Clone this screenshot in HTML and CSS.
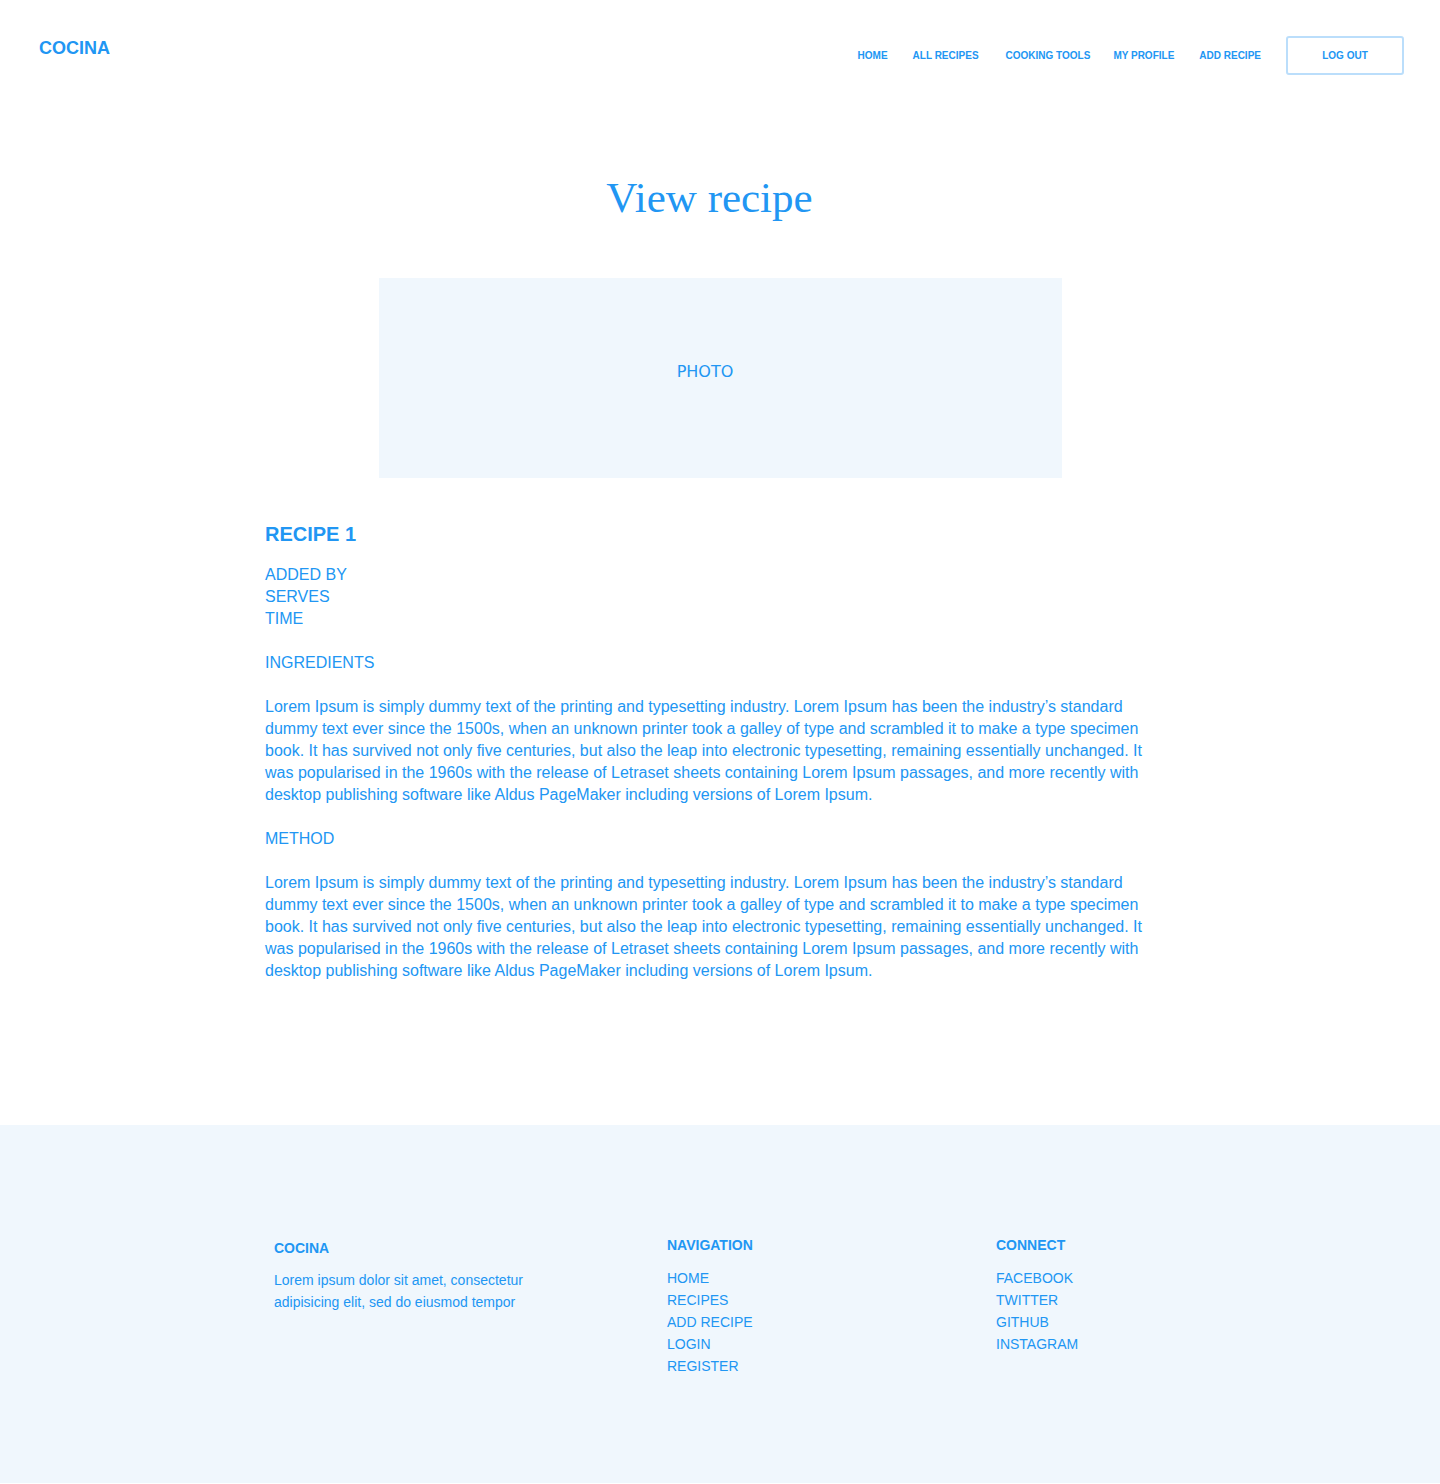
FILE: index.html
```html
<!DOCTYPE html>
<html lang="en">
<head>
<meta charset="utf-8">
<title>Cocina - View recipe</title>
<link rel="stylesheet" href="styles.css">
</head>
<body>
<header class="topbar">
  <a class="logo" href="#">COCINA</a>
  <nav class="mainnav">
    <a href="#">HOME</a>
    <a href="#">ALL RECIPES</a>
    <a class="wide" href="#">COOKING TOOLS</a>
    <a href="#">MY PROFILE</a>
    <a href="#">ADD RECIPE</a>
    <a class="logout" href="#">LOG OUT</a>
  </nav>
</header>

<main class="content">
  <h1 class="title">View recipe</h1>
  <div class="photo">PHOTO</div>
  <h2 class="recipe-name">RECIPE 1</h2>
  <ul class="meta">
    <li>ADDED BY</li>
    <li>SERVES</li>
    <li>TIME</li>
  </ul>
  <h3 class="section">INGREDIENTS</h3>
  <p class="text">Lorem Ipsum is simply dummy text of the printing and typesetting industry. Lorem Ipsum has been the industry’s standard dummy text ever since the 1500s, when an unknown printer took a galley of type and scrambled it to make a type specimen book. It has survived not only five centuries, but also the leap into electronic typesetting, remaining essentially unchanged. It was popularised in the 1960s with the release of Letraset sheets containing Lorem Ipsum passages, and more recently with desktop publishing software like Aldus PageMaker including versions of Lorem Ipsum.</p>
  <h3 class="section">METHOD</h3>
  <p class="text">Lorem Ipsum is simply dummy text of the printing and typesetting industry. Lorem Ipsum has been the industry’s standard dummy text ever since the 1500s, when an unknown printer took a galley of type and scrambled it to make a type specimen book. It has survived not only five centuries, but also the leap into electronic typesetting, remaining essentially unchanged. It was popularised in the 1960s with the release of Letraset sheets containing Lorem Ipsum passages, and more recently with desktop publishing software like Aldus PageMaker including versions of Lorem Ipsum.</p>
</main>

<footer class="footer">
  <div class="footer-inner">
    <div class="fcol about">
      <h4 class="fbrand">COCINA</h4>
      <p class="fdesc">Lorem ipsum dolor sit amet, consectetur adipisicing elit, sed do eiusmod tempor</p>
    </div>
    <div class="fcol">
      <h4 class="fhead">NAVIGATION</h4>
      <ul class="flinks">
        <li><a href="#">HOME</a></li>
        <li><a href="#">RECIPES</a></li>
        <li><a href="#">ADD RECIPE</a></li>
        <li><a href="#">LOGIN</a></li>
        <li><a href="#">REGISTER</a></li>
      </ul>
    </div>
    <div class="fcol">
      <h4 class="fhead">CONNECT</h4>
      <ul class="flinks">
        <li><a href="#">FACEBOOK</a></li>
        <li><a href="#">TWITTER</a></li>
        <li><a href="#">GITHUB</a></li>
        <li><a href="#">INSTAGRAM</a></li>
      </ul>
    </div>
  </div>
</footer>
</body>
</html>
```

FILE: styles.css
```css
* { box-sizing: border-box; }
html, body { margin: 0; padding: 0; }
body {
  font-family: "Liberation Sans", Arial, sans-serif;
  color: #2196f3;
  background: #ffffff;
}
a { color: inherit; text-decoration: none; }

.topbar {
  display: flex;
  justify-content: space-between;
  align-items: flex-start;
  padding: 36px 36px 0 39px;
}
.logo {
  font-size: 18px;
  font-weight: 700;
  line-height: 24px;
}
.mainnav {
  display: flex;
  align-items: center;
  gap: 25px;
}
.mainnav a {
  font-size: 10px;
  font-weight: 700;
  line-height: 14px;
}
.mainnav .wide {
  margin-left: 2px;
  margin-right: -2px;
}
.mainnav .logout {
  display: flex;
  align-items: center;
  justify-content: center;
  width: 118px;
  height: 39px;
  padding-top: 1px;
  border: 2px solid #bbdefb;
  border-radius: 3px;
}

.content {
  width: 910px;
  margin: 0 auto;
  padding-bottom: 143px;
}
.title {
  margin: 98px 0 55px;
  padding-right: 21px;
  text-align: center;
  font-family: "Liberation Serif", "DejaVu Serif", serif;
  font-weight: 400;
  font-size: 43px;
  line-height: 50px;
}
.photo {
  width: 683px;
  height: 200px;
  margin: 0 auto;
  background: #f0f7fd;
  padding: 83px 30px 0 0;
  text-align: center;
  font-family: "DejaVu Sans", sans-serif;
  font-size: 16px;
  line-height: 22px;
}
.recipe-name {
  margin: 44px 0 18px;
  font-size: 20px;
  font-weight: 700;
  line-height: 24px;
}
.meta {
  list-style: none;
  margin: 0 0 22px;
  padding: 0;
  font-size: 16px;
  line-height: 22px;
}
.section {
  margin: 0 0 22px;
  font-size: 16px;
  font-weight: 400;
  line-height: 22px;
}
.text {
  max-width: 895px;
  margin: 0 0 22px;
  font-size: 16px;
  line-height: 22px;
}
.text:last-child { margin-bottom: 0; }

.footer {
  background: #f0f7fd;
  padding: 111px 0 106px;
}
.footer-inner {
  width: 910px;
  margin: 0 auto;
  padding-left: 9px;
  display: grid;
  grid-template-columns: 393px 329px 1fr;
}
.fbrand {
  margin: 3px 0 12px;
  font-size: 14px;
  font-weight: 700;
  line-height: 18px;
}
.fdesc {
  margin: 0;
  font-size: 14px;
  line-height: 22px;
  max-width: 260px;
}
.fhead {
  margin: 0 0 13px;
  font-size: 14px;
  font-weight: 700;
  line-height: 18px;
}
.flinks {
  list-style: none;
  margin: 0;
  padding: 0;
  font-size: 14px;
  line-height: 22px;
}
```
